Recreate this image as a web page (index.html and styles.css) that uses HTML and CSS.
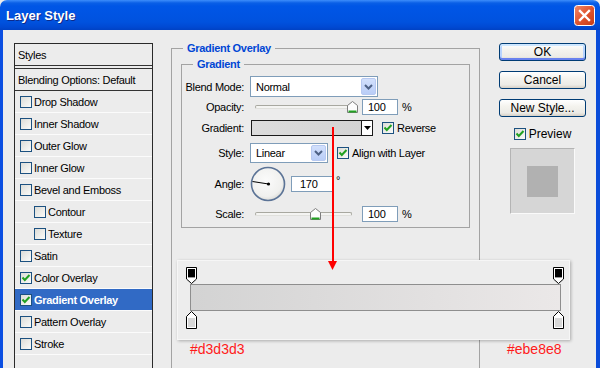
FILE: index.html
```html
<!DOCTYPE html>
<html>
<head>
<meta charset="utf-8">
<link rel="stylesheet" href="styles.css">
</head>
<body>
<div class="window">
  <div class="titlebar">
    <span class="title">Layer Style</span>
    <span class="close"><svg width="21" height="21" viewBox="0 0 21 21"><defs><linearGradient id="cg" x1="0" y1="0" x2="1" y2="1"><stop offset="0" stop-color="#f08a6c"/><stop offset="0.5" stop-color="#e0552f"/><stop offset="1" stop-color="#c43b16"/></linearGradient></defs><rect x="0.5" y="0.5" width="20" height="20" rx="3" fill="url(#cg)" stroke="#fff"/><path d="M6 6 L15 15 M15 6 L6 15" stroke="#fff" stroke-width="2.4" stroke-linecap="square"/></svg></span>
  </div>
  <div class="body">
    <div class="styles">
      <div class="srow head">Styles</div>
      <div class="srow blend">Blending Options: Default</div>
      <div class="srow"><span class="cb"></span>Drop Shadow</div>
      <div class="srow"><span class="cb"></span>Inner Shadow</div>
      <div class="srow"><span class="cb"></span>Outer Glow</div>
      <div class="srow"><span class="cb"></span>Inner Glow</div>
      <div class="srow"><span class="cb"></span>Bevel and Emboss</div>
      <div class="srow sub"><span class="cb"></span>Contour</div>
      <div class="srow sub"><span class="cb"></span>Texture</div>
      <div class="srow"><span class="cb"></span>Satin</div>
      <div class="srow"><span class="cb on"><svg width="10" height="10" viewBox="0 0 10 10"><path d="M1.5 4.5 L3.8 7 L8.5 2" fill="none" stroke="#21a121" stroke-width="2"/></svg></span>Color Overlay</div>
      <div class="srow sel"><span class="cb on"><svg width="10" height="10" viewBox="0 0 10 10"><path d="M1.5 4.5 L3.8 7 L8.5 2" fill="none" stroke="#21a121" stroke-width="2"/></svg></span>Gradient Overlay</div>
      <div class="srow"><span class="cb"></span>Pattern Overlay</div>
      <div class="srow"><span class="cb"></span>Stroke</div>
      <div class="srow"></div>
    </div>

    <div class="main">
      <fieldset class="group outer">
        <legend>Gradient Overlay</legend>
        <fieldset class="group inner">
          <legend>Gradient</legend>
          <div class="field f-blend">
            <span class="lbl">Blend Mode:</span>
            <div class="select s-blend"><span class="val">Normal</span><span class="dd"><svg width="9" height="6" viewBox="0 0 9 6"><path d="M1 1 L4.5 4.5 L8 1" fill="none" stroke="#4d6185" stroke-width="2"/></svg></span></div>
          </div>
          <div class="field f-opacity">
            <span class="lbl">Opacity:</span>
            <div class="slider"><span class="track"></span><svg class="thumb" style="left:97px" width="11" height="12" viewBox="0 0 11 12"><path d="M5.5 0.5 L10.5 4.5 V11.5 H0.5 V4.5 Z" fill="#fdfdfd" stroke="#7d7d7d"/><path d="M1.5 10.5 H9.5" stroke="#21a121" stroke-width="2"/></svg></div>
            <span class="input">100</span><span class="unit">%</span>
          </div>
          <div class="field f-grad">
            <span class="lbl">Gradient:</span>
            <div class="gradpick"><span class="gfill"></span><span class="garrow"><svg width="7" height="4" viewBox="0 0 7 4"><path d="M0 0 H7 L3.5 4 Z" fill="#000"/></svg></span></div>
            <span class="cb on"><svg width="10" height="10" viewBox="0 0 10 10"><path d="M1.5 4.5 L3.8 7 L8.5 2" fill="none" stroke="#21a121" stroke-width="2"/></svg></span><span class="cbtext">Reverse</span>
          </div>
          <div class="field f-style">
            <span class="lbl">Style:</span>
            <div class="select s-style"><span class="val">Linear</span><span class="dd"><svg width="9" height="6" viewBox="0 0 9 6"><path d="M1 1 L4.5 4.5 L8 1" fill="none" stroke="#4d6185" stroke-width="2"/></svg></span></div>
            <span class="cb on"><svg width="10" height="10" viewBox="0 0 10 10"><path d="M1.5 4.5 L3.8 7 L8.5 2" fill="none" stroke="#21a121" stroke-width="2"/></svg></span><span class="cbtext">Align with Layer</span>
          </div>
          <div class="field f-angle">
            <span class="lbl">Angle:</span>
            <svg class="dial" width="36" height="36" viewBox="0 0 36 36"><defs><radialGradient id="dg" cx="0.45" cy="0.4" r="0.6"><stop offset="0" stop-color="#fbfbfb"/><stop offset="0.8" stop-color="#f0f0ee"/><stop offset="1" stop-color="#dcdcd8"/></radialGradient></defs><circle cx="18" cy="18" r="16.5" fill="url(#dg)" stroke="#5b7396" stroke-width="1.6"/><path d="M2.5 15.5 L18.5 18" stroke="#000" stroke-width="1"/><circle cx="18.5" cy="18" r="1.6" fill="#000"/></svg>
            <span class="input i-angle">170</span><span class="deg">°</span>
          </div>
          <div class="field f-scale">
            <span class="lbl">Scale:</span>
            <div class="slider"><span class="track"></span><svg class="thumb" style="left:60px" width="11" height="12" viewBox="0 0 11 12"><path d="M5.5 0.5 L10.5 4.5 V11.5 H0.5 V4.5 Z" fill="#fdfdfd" stroke="#7d7d7d"/><path d="M1.5 10.5 H9.5" stroke="#21a121" stroke-width="2"/></svg></div>
            <span class="input">100</span><span class="unit">%</span>
          </div>
        </fieldset>
      </fieldset>
    </div>

    <div class="side">
      <span class="btn default">OK</span>
      <span class="btn">Cancel</span>
      <span class="btn">New Style...</span>
      <div class="preview-row"><span class="cb on"><svg width="10" height="10" viewBox="0 0 10 10"><path d="M1.5 4.5 L3.8 7 L8.5 2" fill="none" stroke="#21a121" stroke-width="2"/></svg></span><span class="cbtext pv">Preview</span></div>
      <div class="preview"><span class="swatch"></span></div>
    </div>
  </div>

  <div class="editor">
    <div class="stops">
      <svg width="11" height="17" viewBox="0 0 11 17"><path d="M0.5 0.5 H10.5 V12 L5.5 16.5 L0.5 12 Z" fill="#fff" stroke="#000"/><rect x="2" y="2" width="7" height="8" fill="#000"/><rect x="2" y="10" width="7" height="1" fill="#9a9a9a"/></svg>
      <svg width="11" height="17" viewBox="0 0 11 17"><path d="M0.5 0.5 H10.5 V12 L5.5 16.5 L0.5 12 Z" fill="#fff" stroke="#000"/><rect x="2" y="2" width="7" height="8" fill="#000"/><rect x="2" y="10" width="7" height="1" fill="#9a9a9a"/></svg>
    </div>
    <div class="gbar"></div>
    <div class="stops">
      <svg width="11" height="18" viewBox="0 0 11 18"><path d="M5.5 0.5 L10.5 5.5 V17.5 H0.5 V5.5 Z" fill="#fff" stroke="#000"/><rect x="2" y="7" width="7" height="9" fill="#d8d8d8"/></svg>
      <svg width="11" height="18" viewBox="0 0 11 18"><path d="M5.5 0.5 L10.5 5.5 V17.5 H0.5 V5.5 Z" fill="#fff" stroke="#000"/><rect x="2" y="7" width="7" height="9" fill="#d8d8d8"/></svg>
    </div>
  </div>
  <div class="arrow"><span class="shaft"></span><svg width="9" height="9" viewBox="0 0 9 9"><path d="M0 0 H9 L4.5 9 Z" fill="#ff0000"/></svg></div>
  <span class="note n-left">#d3d3d3</span>
  <span class="note n-right">#ebe8e8</span>
</div>
</body>
</html>
```
FILE: styles.css
```css
* { box-sizing: border-box; margin: 0; padding: 0; }
html, body { width: 600px; height: 368px; overflow: hidden; }
body {
  font-family: "Liberation Sans", Arial, sans-serif;
  font-size: 11px;
  letter-spacing: -0.3px;
  color: #000;
  background: #ececec;
}
.window {
  position: relative;
  width: 600px;
  height: 368px;
  display: flex;
  flex-direction: column;
  overflow: hidden;
  background: #ececec;
}
.titlebar {
  flex: none;
  height: 30px;
  display: flex;
  align-items: center;
  justify-content: space-between;
  padding: 0 5px 0 6px;
  border-radius: 7px 7px 0 0;
  background: linear-gradient(#3d8dfb 0, #0a5fe6 3px, #0056e6 6px, #0054e3 14px, #0052de 22px, #0049d3 27px, #0042c4 30px);
}
.title {
  color: #fff;
  font-weight: bold;
  font-size: 13px;
  letter-spacing: 0;
  text-shadow: 1px 1px 0 #0d2a8a;
}
.close { display: flex; }
.body {
  flex: 1;
  display: flex;
  align-items: flex-start;
  border-left: 3px solid #0b4fe2;
  border-right: 4px solid #0a4cd9;
  background: #ececec;
  overflow: hidden;
}

/* styles list */
.styles {
  flex: none;
  width: 139px;
  height: 340px;
  margin: 13px 0 0 11px;
  border: 1px solid #2a2a2a;
  background: #ececec;
}
.srow {
  height: 22px;
  display: flex;
  align-items: center;
  padding-left: 5px;
  border-bottom: 1px solid #fbfbfb;
  white-space: nowrap;
}
.srow .cb { margin-right: 2px; }
.srow.head { height: 25px; padding-left: 3px; border-bottom: 4px double #333; }
.srow.blend { padding-left: 3px; border-bottom-color: #333; }
.srow.sub { padding-left: 19px; }
.srow.sel { background: #316ac5; color: #fff; font-weight: bold; }

.cb {
  flex: none;
  width: 12px;
  height: 12px;
  border: 1px solid #1c5180;
  background: linear-gradient(135deg, #dcdcd7, #fbfbf9);
  display: flex;
  align-items: center;
  justify-content: center;
}
.cbtext { margin-left: 3px; white-space: nowrap; }

/* main */
.main {
  flex: none;
  width: 309px;
  margin: 12px 0 0 18px;
}
.group {
  border: 1px solid #a3a3a3;
  min-inline-size: 0;
}
.group > legend {
  line-height: 12px;
  font-weight: bold;
  color: #0046d5;
  padding: 0 4px;
}
.outer { height: 340px; padding: 4px 9px 0; }
.outer > legend { margin-left: 2px; }
.inner { padding: 6px 0 5px; }
.inner > legend { margin-left: 11px; }

.field { display: flex; align-items: center; }
.lbl { flex: none; width: 62px; margin-right: 6px; text-align: right; white-space: nowrap; }
.f-blend { height: 21px; }
.f-opacity { height: 16px; margin-top: 2px; }
.f-grad { height: 16px; margin-top: 5px; }
.f-style { height: 20px; margin-top: 7px; }
.f-angle { height: 36px; margin-top: 3px; }
.f-scale { height: 16px; margin-top: 4px; }

.select {
  height: 100%;
  display: flex;
  align-items: center;
  justify-content: space-between;
  border: 1px solid #7f9db9;
  background: #fff;
  padding: 1px 1px 1px 5px;
}
.s-blend { width: 128px; }
.s-style { width: 78px; margin-right: 9px; }
.select .val { font-size: 11px; }
.dd {
  width: 15px;
  height: 100%;
  display: flex;
  align-items: center;
  justify-content: center;
  background: linear-gradient(#d2e0fc, #b9cdf7);
  border: 1px solid #b7c9f1;
  border-radius: 2px;
}

.slider {
  position: relative;
  flex: none;
  width: 107px;
  height: 16px;
  display: flex;
  align-items: center;
}
.track {
  display: block;
  width: 97px;
  height: 4px;
  margin-left: 5px;
  border: 1px solid #a8a8a0;
  border-bottom-color: #e0e0dc;
  border-radius: 2px;
  background: #f4f4f2;
}
.thumb { position: absolute; top: 2px; }

.input {
  flex: none;
  width: 36px;
  height: 16px;
  margin-left: 5px;
  border: 1px solid #7f9db9;
  background: #fff;
  padding-left: 5px;
  line-height: 14px;
}
.unit { margin-left: 4px; }
.i-angle { width: 42px; padding-left: 8px; }
.deg { align-self: flex-start; margin: 8px 0 0 3px; font-size: 11px; }

.gradpick {
  flex: none;
  width: 122px;
  height: 16px;
  margin-left: 1px;
  margin-right: 9px;
  display: flex;
  border: 1px solid #1a1a1a;
}
.gfill { flex: 1; background: linear-gradient(90deg, #dcdcdc, #d3d3d3); }
.garrow {
  width: 11px;
  border-left: 1px solid #1a1a1a;
  background: #fff;
  display: flex;
  align-items: center;
  justify-content: center;
}
.dial { flex: none; }

/* right column */
.side {
  flex: none;
  width: 87px;
  margin: 13px 0 0 19px;
  display: flex;
  flex-direction: column;
}
.btn {
  height: 18px;
  display: flex;
  align-items: center;
  justify-content: center;
  border: 1px solid #003c74;
  border-radius: 3px;
  background: linear-gradient(#ffffff, #f4f3ee 40%, #ecebe6 80%, #d6d0c5);
  font-size: 12px;
  letter-spacing: 0;
  margin-bottom: 10px;
}
.btn.default {
  box-shadow: inset 0 2px 0 #cee7ff, inset 0 -2px 0 #6982ee, inset 2px 0 0 #b8d4fe, inset -2px 0 0 #b8d4fe;
}
.preview-row {
  display: flex;
  align-items: center;
  justify-content: center;
  height: 14px;
}
.pv { font-size: 12px; letter-spacing: 0; }
.preview {
  align-self: center;
  width: 65px;
  height: 66px;
  margin-top: 7px;
  border: 1px solid #b4b4b4;
  border-right-color: #fafafa;
  border-bottom-color: #fafafa;
  background: #d6d6d6;
  display: flex;
  align-items: center;
  justify-content: center;
}
.swatch { width: 31px; height: 31px; background: #b1b1b1; }

/* annotations */
.editor {
  position: absolute;
  left: 177px;
  top: 260px;
  width: 393px;
  height: 80px;
  background: #ededed;
  border: 1px solid #f6f6f6;
  box-shadow: 1px 1px 3px rgba(0, 0, 0, 0.28);
  padding: 6px 5px 0 8px;
  display: flex;
  flex-direction: column;
}
.stops { display: flex; justify-content: space-between; }
.stops svg { display: block; }
.gbar {
  height: 27px;
  margin: 0 3px 0 4px;
  border: 1px solid #8e8e8e;
  background: linear-gradient(90deg, #d3d3d3, #ebe8e8);
}
.arrow {
  position: absolute;
  z-index: 2;
  left: 328px;
  top: 127px;
  display: flex;
  flex-direction: column;
  align-items: center;
}
.arrow svg { display: block; }
.shaft { width: 2px; height: 134px; background: #ff0000; }
.note {
  position: absolute;
  top: 341px;
  font-size: 14px;
  line-height: 16px;
  letter-spacing: 0;
  color: #ff1a1a;
}
.n-left { left: 190px; }
.n-right { left: 507px; }
```
